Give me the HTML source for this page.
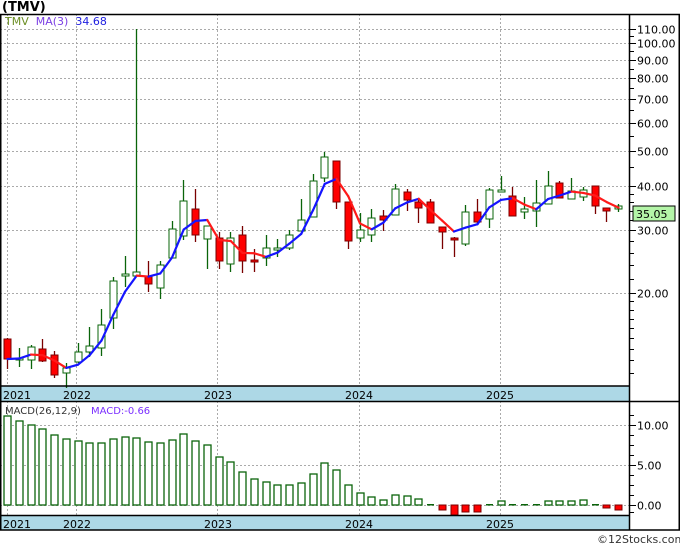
<!DOCTYPE html><html><head><meta charset="utf-8"><style>
html,body{margin:0;padding:0;background:#fff;width:680px;height:546px;overflow:hidden}
svg{display:block}
text{font-family:"DejaVu Sans","Liberation Sans",sans-serif;font-size:11px}
</style></head><body>
<svg id="s" width="680" height="546" xmlns="http://www.w3.org/2000/svg">
<text x="2" y="11" style="font-size:13px;font-weight:bold">(TMV)</text>
<g id="grid" stroke="#aaa" stroke-dasharray="2,2" stroke-width="1"></g>
<rect x="0" y="386" width="629" height="15" fill="#add8e6"/>
<rect x="0" y="516" width="629" height="14" fill="#add8e6"/>
<g id="c"></g>
<g fill="none" stroke="#000" stroke-width="1.5">
<line x1="0" y1="14.5" x2="680" y2="14.5"/>
<line x1="0.75" y1="14" x2="0.75" y2="530"/>
<line x1="679.25" y1="14" x2="679.25" y2="530"/>
<line x1="629.5" y1="14" x2="629.5" y2="530"/>
<line x1="0" y1="386" x2="629" y2="386"/>
<line x1="0" y1="401.5" x2="680" y2="401.5"/>
<line x1="0" y1="515.5" x2="629" y2="515.5"/>
<line x1="0" y1="530" x2="680" y2="530"/>
</g>
<g id="ax"></g>
<text x="3" y="399">2021</text><text x="63" y="399">2022</text><text x="204" y="399">2023</text><text x="345" y="399">2024</text><text x="486" y="399">2025</text>
<text x="3" y="528">2021</text><text x="63" y="528">2022</text><text x="204" y="528">2023</text><text x="345" y="528">2024</text><text x="486" y="528">2025</text>
<text x="5" y="25" style="font-size:11px"><tspan fill="#6b8e23">TMV</tspan><tspan fill="#7b3fe4" dx="7">MA(3)</tspan><tspan fill="#2020e0" dx="7">34.68</tspan></text>
<text x="5" y="414" style="font-size:10px"><tspan fill="#333">MACD(26,12,9)</tspan><tspan fill="#7b2fff" dx="10">MACD:-0.66</tspan></text>
<rect x="633" y="206" width="42" height="15" fill="#b4f5a8" stroke="#000" stroke-width="1"/>
<text x="636" y="218">35.05</text>
<text x="597" y="543" style="font-size:11px" fill="#333">©12Stocks.com</text>
</svg>
<script>
var s=document.getElementById('s'),g=document.getElementById('grid'),c=document.getElementById('c'),ax=document.getElementById('ax');
function el(p,t,a){var e=document.createElementNS('http://www.w3.org/2000/svg',t);for(var k in a)e.setAttribute(k,a[k]);p.appendChild(e);return e;}
function Y(p){return 759-155.4*Math.log(p);}
var lv=[110,100,90,80,70,60,50,40,30,20];
lv.forEach(function(p){var y=Math.round(Y(p))+0.5;el(g,'line',{x1:0,y1:y,x2:629,y2:y});el(ax,'line',{x1:629,y1:y,x2:636,y2:y,stroke:'#000'});var t=el(ax,'text',{x:637,y:y+4});t.textContent=p.toFixed(2);});
[12,13,14,15,16,17,18,19,22,24,26,28,32,34,36,38,45,55,65,75,85,95,105].forEach(function(p){var y=Math.round(Y(p))+0.5;el(ax,'line',{x1:629,y1:y,x2:634,y2:y,stroke:'#000'});});
[[10,425],[5,465],[0,505]].forEach(function(a){var y=a[1]+0.5;el(g,'line',{x1:0,y1:y,x2:629,y2:y});el(ax,'line',{x1:629,y1:y,x2:636,y2:y,stroke:'#000'});var t=el(ax,'text',{x:637,y:y+4});t.textContent=a[0].toFixed(2);});
[415,435,445,455,475,485,495,512].forEach(function(y){el(ax,'line',{x1:629,y1:y+.5,x2:634,y2:y+.5,stroke:'#000'});});
[7,76,217,359,500].forEach(function(x){el(g,'line',{x1:x+.5,y1:14,x2:x+.5,y2:386});el(g,'line',{x1:x+.5,y1:401,x2:x+.5,y2:530});});
var d=[['r',339,359,338,369],['g',358,360,348,367],['g',347,360,345,369],['r',349,361,339,362],['r',355,375,351,378],['g',368,373,363,388],['g',352,362,343,363],['g',346,352,327,357],['g',325,348,309,356],['g',281,318,277,329],['g',274,276,256,287],['g',272,276,29,277],['r',276,284,261,292],['g',265,288,261,299],['g',229,258,221,258],['g',201,236,180,240],['r',209,235,189,242],['g',226,239,226,269],['r',238,261,232,269],['g',238,264,232,272],['r',235,261,226,273],['r',260,262,249,272],['g',248,258,235,266],['g',248,250,239,257],['g',235,248,230,250],['g',220,231,199,231],['g',181,217,174,217],['g',157,178,152,182],['r',161,202,161,209],['r',202,241,202,249],['g',230,238,213,242],['g',218,235,209,242],['r',216,220,210,231],['g',189,215,184,215],['r',192,200,189,211],['r',202,208,199,223],['r',202,223,199,223],['r',227,232,227,249],['r',238,240,237,257],['g',212,244,205,246],['r',212,222,199,223],['g',190,219,188,228],['g',190,192,176,192],['r',196,216,187,216],['g',209,212,197,219],['g',203,211,180,227],['g',186,204,171,204],['r',183,198,181,198],['g',191,199,178,199],['g',190,197,187,201],['r',186,206,186,214],['r',208,211,208,222],['g',206,209,204,212]];
var closes=[];
d.forEach(function(k,i){var x=Math.round(7+11.75*i);var gr=k[0]=='g';var col=gr?'#0a640a':'#7a0000';
el(c,'line',{x1:x+.5,y1:k[3],x2:x+.5,y2:k[4],stroke:col,'stroke-width':1.3});
el(c,'rect',{x:x-3,y:k[1],width:7,height:Math.max(1,k[2]-k[1]),fill:gr?'#fff':'#ff0000',stroke:col,'stroke-width':1});
closes.push(gr?k[1]:k[2]);});
var ma=[];closes.forEach(function(y,i){var s=0,n=0;for(var j=Math.max(0,i-2);j<=i;j++){s+=Math.exp((759-closes[j])/155.4);n++;}ma.push(Y(s/n));});
for(var i=1;i<ma.length;i++){var x0=7+11.75*(i-1)+0.5,x1=7+11.75*i+0.5;el(c,'line',{x1:x0,y1:ma[i-1],x2:x1,y2:ma[i],stroke:ma[i]<ma[i-1]?'#1515ff':'#ff1a1a','stroke-width':2.2,'stroke-linecap':'round'});}
var m=[416,421,425,429,435,439,441,443,443,439,437,438,442,443,440,434,441,445,457,462,472,479,482,485,485,483,474,463,470,485,493,497,500,495,496,499,-504,-510,-515,-512,-512,-505,501,-504,-505,-505,501,501,501,500,-504,-508,-510];
m.forEach(function(v,i){var x=Math.round(7+11.75*i)-3;
if(v>0){ if(v>=503) el(c,'rect',{x:x,y:503,width:7,height:2,fill:'#0a640a'}); else el(c,'rect',{x:x,y:v,width:7,height:505-v,fill:'#fff',stroke:'#0a640a','stroke-width':1.3});}
else{v=-v; if(v<=505) el(c,'rect',{x:x,y:504,width:7,height:1.5,fill:'#0a640a'}); else el(c,'rect',{x:x,y:505,width:7,height:v-505,fill:'#ff0000',stroke:'#7a0000','stroke-width':1});}
});
</script>
</body></html>
